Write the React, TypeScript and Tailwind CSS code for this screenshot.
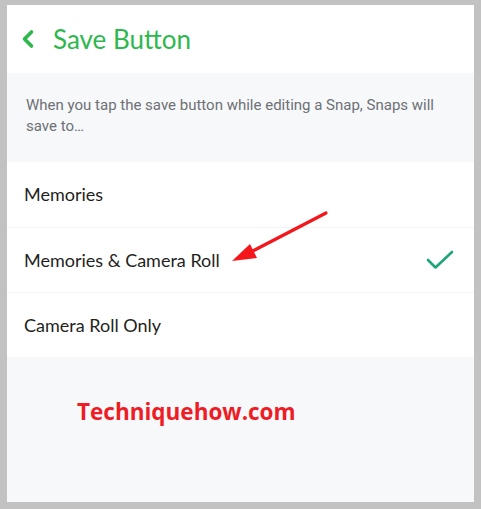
const options = [
  { label: "Memories", checked: false },
  { label: "Memories & Camera Roll", checked: true },
  { label: "Camera Roll Only", checked: false },
];

export default function App() {
  return (
    <div className="h-[509px] w-[481px] bg-[#c2c2c2] pt-[5px] pl-[7px] pr-[7px] pb-[7px]">
      <div className="relative flex h-full flex-col bg-[#f7f8fa] font-['Lato',sans-serif]">
        {/* header */}
        <div className="flex h-[68px] items-center bg-white pl-[14px]">
          <svg width="14" height="20" viewBox="0 0 14 20" fill="none">
            <path d="M10.5 3 L3.5 10 L10.5 17" stroke="#2db84d" strokeWidth="3.6" strokeLinecap="round" strokeLinejoin="round" />
          </svg>
          <h1 className="ml-[18px] text-[26px] leading-none text-[#2db84d]">Save Button</h1>
        </div>

        {/* description */}
        <div className="h-[89px] px-[19px] pt-[22px] font-['Roboto',sans-serif] text-[15px] leading-[21px] text-[#6d7075]">
          When you tap the save button while editing a Snap, Snaps will save to…
        </div>

        {/* options */}
        <div className="bg-white">
          {options.map(({ label, checked }, i) => (
            <div
              key={label}
              className={
                "flex h-[65px] items-center justify-between pl-[17px] pr-[20px] text-[18px] text-[#1f1f22] " +
                (i > 0 ? "border-t border-[#f3f4f6]" : "")
              }
            >
              <span>{label}</span>
              {checked && (
                <svg width="28" height="22" viewBox="0 0 28 22" fill="none">
                  <path d="M2 11 L9.5 18.5 L26 3" stroke="#1ea57a" strokeWidth="2.6" strokeLinecap="round" strokeLinejoin="round" />
                </svg>
              )}
            </div>
          ))}
        </div>

        <div className="pl-[70px] pt-[38px] font-['Open_Sans',sans-serif] text-[22.5px] font-bold text-[#ee1c25]">
          Techniquehow.com
        </div>

        {/* annotation arrow */}
        <svg className="pointer-events-none absolute left-0 top-0" width="467" height="497">
          <line x1="319" y1="208" x2="240" y2="249" stroke="#f5161b" strokeWidth="3.2" strokeLinecap="round" />
          <polygon points="225,256 243,239 250,253" fill="#f5161b" />
        </svg>
      </div>
    </div>
  );
}
